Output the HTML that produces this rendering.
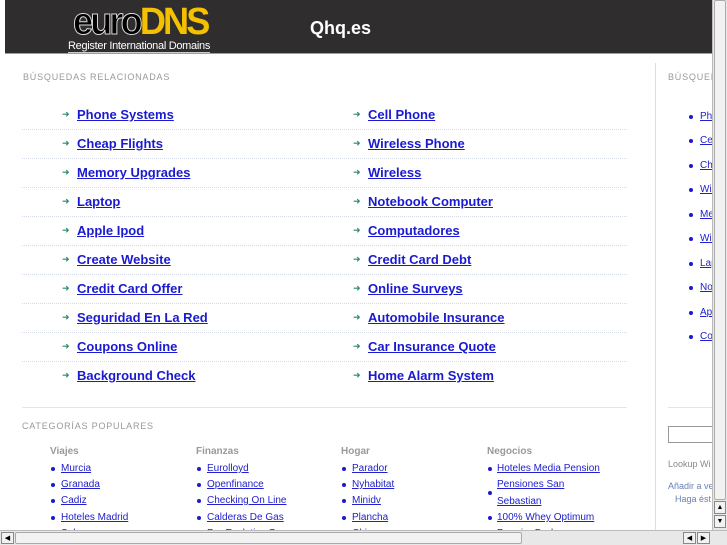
<!DOCTYPE html>
<html><head><meta charset="utf-8"><style>
*{margin:0;padding:0;box-sizing:border-box}
body{width:727px;height:545px;overflow:hidden;background:#fff;font-family:"Liberation Sans",sans-serif;position:relative}
.hdr{position:absolute;left:5px;top:0;width:707px;height:54px;background:#2f2d2d;border-bottom:1px solid #8aa0c8}
.logo{position:absolute;left:68px;top:3px;font:bold 38px/38px "Liberation Sans",sans-serif;letter-spacing:-3px;transform:scaleX(0.95);transform-origin:left}
.logo .e{color:#000;-webkit-text-stroke:1px #ddd}
.logo .d{color:#f5c000}
.tag{position:absolute;left:63px;top:40px;color:#fff;font-size:11px;border-bottom:1px solid #ccc;letter-spacing:-0.3px}
.title{position:absolute;left:305px;top:18px;color:#fff;font-size:18px;font-weight:bold}
.lbl{position:absolute;font-size:9px;color:#999;letter-spacing:0.8px}
.a{position:absolute;font-size:13px;font-weight:bold;color:#1a1ad0;text-decoration:underline}
.ar{position:absolute;color:#2a8a6a;font-size:9px}
.sep{position:absolute;left:22px;width:605px;border-top:1px dotted #d5dbe6}
.c{position:absolute;font-size:10px;color:#2020cc;text-decoration:underline;margin-top:2px}
.ch{position:absolute;font-size:10px;font-weight:bold;color:#999}
.b{position:absolute;width:4px;height:4px;border-radius:2px;background:#1a1ad0}
.s{position:absolute;font-size:10px;color:#2020cc;text-decoration:underline;left:700px;margin-top:2px}
</style></head><body>
<div class="hdr">
<div class="logo"><span class="e">euro</span><span class="d">DNS</span></div>
<div class="tag">Register International Domains</div>
<div class="title">Qhq.es</div>
</div>
<div class="lbl" style="left:23px;top:72px">BÚSQUEDAS RELACIONADAS</div>

<div class="ar" style="left:62px;top:109px">➜</div><div class="a" style="left:77px;top:107px">Phone Systems</div>
<div class="ar" style="left:353px;top:109px">➜</div><div class="a" style="left:368px;top:107px">Cell Phone</div>
<div class="sep" style="top:129px"></div>
<div class="ar" style="left:62px;top:138px">➜</div><div class="a" style="left:77px;top:136px">Cheap Flights</div>
<div class="ar" style="left:353px;top:138px">➜</div><div class="a" style="left:368px;top:136px">Wireless Phone</div>
<div class="sep" style="top:158px"></div>
<div class="ar" style="left:62px;top:167px">➜</div><div class="a" style="left:77px;top:165px">Memory Upgrades</div>
<div class="ar" style="left:353px;top:167px">➜</div><div class="a" style="left:368px;top:165px">Wireless</div>
<div class="sep" style="top:187px"></div>
<div class="ar" style="left:62px;top:196px">➜</div><div class="a" style="left:77px;top:194px">Laptop</div>
<div class="ar" style="left:353px;top:196px">➜</div><div class="a" style="left:368px;top:194px">Notebook Computer</div>
<div class="sep" style="top:216px"></div>
<div class="ar" style="left:62px;top:225px">➜</div><div class="a" style="left:77px;top:223px">Apple Ipod</div>
<div class="ar" style="left:353px;top:225px">➜</div><div class="a" style="left:368px;top:223px">Computadores</div>
<div class="sep" style="top:245px"></div>
<div class="ar" style="left:62px;top:254px">➜</div><div class="a" style="left:77px;top:252px">Create Website</div>
<div class="ar" style="left:353px;top:254px">➜</div><div class="a" style="left:368px;top:252px">Credit Card Debt</div>
<div class="sep" style="top:274px"></div>
<div class="ar" style="left:62px;top:283px">➜</div><div class="a" style="left:77px;top:281px">Credit Card Offer</div>
<div class="ar" style="left:353px;top:283px">➜</div><div class="a" style="left:368px;top:281px">Online Surveys</div>
<div class="sep" style="top:303px"></div>
<div class="ar" style="left:62px;top:312px">➜</div><div class="a" style="left:77px;top:310px">Seguridad En La Red</div>
<div class="ar" style="left:353px;top:312px">➜</div><div class="a" style="left:368px;top:310px">Automobile Insurance</div>
<div class="sep" style="top:332px"></div>
<div class="ar" style="left:62px;top:341px">➜</div><div class="a" style="left:77px;top:339px">Coupons Online</div>
<div class="ar" style="left:353px;top:341px">➜</div><div class="a" style="left:368px;top:339px">Car Insurance Quote</div>
<div class="sep" style="top:361px"></div>
<div class="ar" style="left:62px;top:370px">➜</div><div class="a" style="left:77px;top:368px">Background Check</div>
<div class="ar" style="left:353px;top:370px">➜</div><div class="a" style="left:368px;top:368px">Home Alarm System</div>

<div style="position:absolute;left:22px;top:407px;width:605px;border-top:1px solid #e0e6ef"></div>
<div class="lbl" style="left:22px;top:421px">CATEGORÍAS POPULARES</div>
<div class="ch" style="left:50px;top:446px">Viajes</div>
<div class="ch" style="left:196px;top:446px">Finanzas</div>
<div class="ch" style="left:341px;top:446px">Hogar</div>
<div class="ch" style="left:487px;top:446px">Negocios</div>

<div class="b" style="left:51px;top:467px"></div><div class="c" style="left:61px;top:461px">Murcia</div>
<div class="b" style="left:51px;top:483px"></div><div class="c" style="left:61px;top:477px">Granada</div>
<div class="b" style="left:51px;top:499px"></div><div class="c" style="left:61px;top:493px">Cadiz</div>
<div class="b" style="left:51px;top:516px"></div><div class="c" style="left:61px;top:510px">Hoteles Madrid</div>
<div class="b" style="left:51px;top:532px"></div><div class="c" style="left:61px;top:526px">Sol</div>
<div class="b" style="left:197px;top:467px"></div><div class="c" style="left:207px;top:461px">Eurolloyd</div>
<div class="b" style="left:197px;top:483px"></div><div class="c" style="left:207px;top:477px">Openfinance</div>
<div class="b" style="left:197px;top:499px"></div><div class="c" style="left:207px;top:493px">Checking On Line</div>
<div class="b" style="left:197px;top:516px"></div><div class="c" style="left:207px;top:510px">Calderas De Gas</div>
<div class="b" style="left:197px;top:532px"></div><div class="c" style="left:207px;top:526px">Pro Evolution 7</div>
<div class="b" style="left:342px;top:467px"></div><div class="c" style="left:352px;top:461px">Parador</div>
<div class="b" style="left:342px;top:483px"></div><div class="c" style="left:352px;top:477px">Nyhabitat</div>
<div class="b" style="left:342px;top:499px"></div><div class="c" style="left:352px;top:493px">Minidv</div>
<div class="b" style="left:342px;top:516px"></div><div class="c" style="left:352px;top:510px">Plancha</div>
<div class="b" style="left:342px;top:532px"></div><div class="c" style="left:352px;top:526px">Chica</div>
<div class="b" style="left:488px;top:467px"></div><div class="c" style="left:497px;top:461px">Hoteles Media Pension</div>
<div class="b" style="left:488px;top:491px"></div><div class="c" style="left:497px;top:477px">Pensiones San</div><div class="c" style="left:497px;top:494px">Sebastian</div>
<div class="b" style="left:488px;top:516px"></div><div class="c" style="left:497px;top:510px">100% Whey Optimum</div>
<div class="b" style="left:488px;top:532px"></div><div class="c" style="left:497px;top:526px">Premier Dodge</div>

<div style="position:absolute;left:655px;top:63px;height:467px;border-left:1px solid #d5deec"></div>
<div class="lbl" style="left:668px;top:72px">BÚSQUEDAS</div>
<div class="b" style="left:689px;top:115px"></div><div class="s" style="top:109px">Phone</div>
<div class="b" style="left:689px;top:139px"></div><div class="s" style="top:133px">Cell</div>
<div class="b" style="left:689px;top:164px"></div><div class="s" style="top:158px">Cheap</div>
<div class="b" style="left:689px;top:188px"></div><div class="s" style="top:182px">Wire</div>
<div class="b" style="left:689px;top:213px"></div><div class="s" style="top:207px">Mem</div>
<div class="b" style="left:689px;top:237px"></div><div class="s" style="top:231px">Wire</div>
<div class="b" style="left:689px;top:262px"></div><div class="s" style="top:256px">Lapt</div>
<div class="b" style="left:689px;top:286px"></div><div class="s" style="top:280px">Note</div>
<div class="b" style="left:689px;top:311px"></div><div class="s" style="top:305px">Appl</div>
<div class="b" style="left:689px;top:335px"></div><div class="s" style="top:329px">Com</div>
<div style="position:absolute;left:668px;top:407px;width:50px;border-top:1px solid #e0e6ef"></div>
<div style="position:absolute;left:668px;top:426px;width:50px;height:17px;border:1px solid #999"></div>
<div style="position:absolute;left:668px;top:459px;font-size:9px;color:#888">Lookup Wi</div>
<div style="position:absolute;left:668px;top:481px;font-size:9px;color:#6a7fb5">Añadir a ve</div>
<div style="position:absolute;left:675px;top:494px;font-size:9px;color:#6a7fb5">Haga ést</div>

<div style="position:absolute;left:712px;top:0;width:15px;height:530px;background:#e8e8e8;border-left:1px solid #bbb">
<div style="position:absolute;left:1px;top:0;width:12px;height:500px;background:#f2f2f2;border:1px solid #aaa;border-radius:2px"></div>
<div style="position:absolute;left:1px;top:501px;width:12px;height:13px;background:#f2f2f2;border:1px solid #888;font-size:7px;text-align:center;line-height:12px">▲</div>
<div style="position:absolute;left:1px;top:515px;width:12px;height:13px;background:#f2f2f2;border:1px solid #888;font-size:7px;text-align:center;line-height:12px">▼</div>
</div>
<div style="position:absolute;left:0;top:530px;width:727px;height:15px;background:#e8e8e8;border-top:1px solid #bbb">
<div style="position:absolute;left:1px;top:1px;width:13px;height:12px;border:1px solid #888;background:#f2f2f2;font-size:7px;line-height:11px;text-align:center">◀</div>
<div style="position:absolute;left:15px;top:1px;width:507px;height:12px;border:1px solid #aaa;background:#f2f2f2;border-radius:2px"></div>
<div style="position:absolute;left:683px;top:1px;width:13px;height:12px;border:1px solid #888;background:#f2f2f2;font-size:7px;line-height:11px;text-align:center">◀</div>
<div style="position:absolute;left:697px;top:1px;width:13px;height:12px;border:1px solid #888;background:#f2f2f2;font-size:7px;line-height:11px;text-align:center">▶</div>
</div>
</body></html>
